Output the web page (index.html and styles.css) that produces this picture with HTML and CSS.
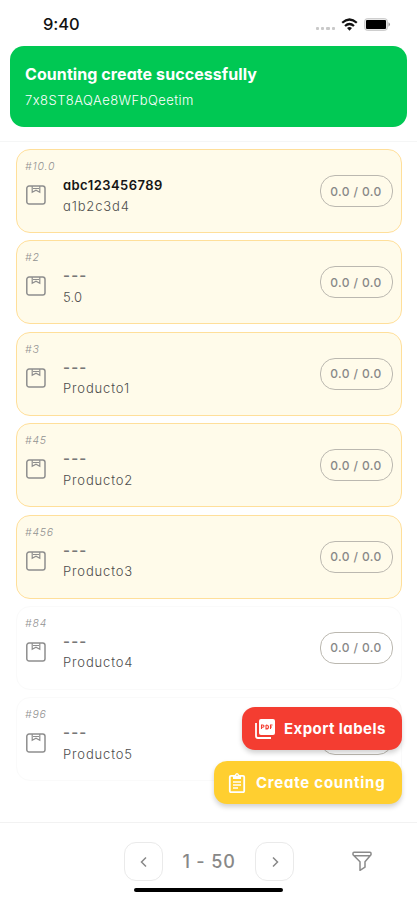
FILE: index.html
```
<!DOCTYPE html>
<html lang="en">
<head>
<meta charset="utf-8">
<title>Counting</title>
<link rel="stylesheet" href="styles.css">
</head>
<body>
<svg width="0" height="0" class="defs" aria-hidden="true">
  <symbol id="box" viewBox="0 0 20 20"><rect x=".8" y="1" width="18.200" height="18" rx="2.300" fill="none" stroke="currentColor" stroke-width="1.500"/><path d="M6.200 1v6.300L10 5.200l3.800 2.100V1M7 3.500h6" fill="none" stroke="currentColor" stroke-width="1.200"/></symbol>
</svg>
<main class="screen">
  <header class="status">
    <span class="time">9:40</span>
    <span class="signal"><i></i><i></i><i></i><i></i></span>
    <svg class="wifi" viewBox="0 0 17 13"><g fill="none" stroke="#111" stroke-width="2.200"><path d="M1.200 4.800Q8.500 -1.800 15.800 4.800"/><path d="M4 8Q8.500 4 13 8"/></g><path d="M6 10Q8.500 8 11 10L8.500 12.700Z" fill="#111"/></svg>
    <svg class="battery" viewBox="0 0 27 13"><rect x=".7" y=".7" width="22.600" height="11.600" rx="2.500" fill="#eee" stroke="#c4c4c4"/><rect x="2" y="2" width="20" height="9" rx="1" fill="#000"/><path d="M24.500 4.300q3 2.200 0 4.400z" fill="#999"/></svg>
  </header>
  <section class="toast">
    <h1>Counting create successfully</h1>
    <p>7x8ST8AQAe8WFbQeetim</p>
  </section>
  <section class="list">
    <article class="card warm"><div class="tag">#10.0</div><svg class="box"><use href="#box"/></svg><div class="info"><b class="name">abc123456789</b><span class="sub">a1b2c3d4</span></div><span class="pill">0.0 / 0.0</span></article>
    <article class="card warm"><div class="tag">#2</div><svg class="box"><use href="#box"/></svg><div class="info"><b class="dash">---</b><span class="sub short">5.0</span></div><span class="pill">0.0 / 0.0</span></article>
    <article class="card warm"><div class="tag">#3</div><svg class="box"><use href="#box"/></svg><div class="info"><b class="dash">---</b><span class="sub">Producto1</span></div><span class="pill">0.0 / 0.0</span></article>
    <article class="card warm"><div class="tag">#45</div><svg class="box"><use href="#box"/></svg><div class="info"><b class="dash">---</b><span class="sub">Producto2</span></div><span class="pill">0.0 / 0.0</span></article>
    <article class="card warm"><div class="tag">#456</div><svg class="box"><use href="#box"/></svg><div class="info"><b class="dash">---</b><span class="sub">Producto3</span></div><span class="pill">0.0 / 0.0</span></article>
    <article class="card"><div class="tag">#84</div><svg class="box"><use href="#box"/></svg><div class="info"><b class="dash">---</b><span class="sub">Producto4</span></div><span class="pill">0.0 / 0.0</span></article>
    <article class="card"><div class="tag">#96</div><svg class="box"><use href="#box"/></svg><div class="info"><b class="dash">---</b><span class="sub">Producto5</span></div><span class="pill"></span></article>
    <div class="actions">
      <button class="action export"><svg viewBox="0 0 20 20"><path d="M1 4v13q0 2 2 2h13" fill="none" stroke="#fff" stroke-width="1.800"/><rect x="4" y="0" width="16" height="16" rx="2" fill="#fff"/><path d="M6.500 10V6h1.200q1.300 0 1.300 1.100T7.700 8.200H6.500M11 6v4q2.500 0 2.500-2T11 6M15.500 10V6h2M15.500 8h1.500" fill="none" stroke="#f43d31" stroke-width="1.100"/></svg><span>Export labels</span></button>
      <button class="action create"><svg viewBox="0 0 20 20"><path d="M4 2.800h12q1.200 0 1.200 1.200v14q0 1.200-1.200 1.200H4q-1.200 0-1.200-1.200V4Q2.800 2.800 4 2.800z" fill="none" stroke="#fff" stroke-width="1.800"/><path d="M6 6V2h1.700q2.300-4 4.600 0H14v4z" fill="#fff"/><circle cx="10" cy="2.300" r=".8" fill="#ffcf30"/><path d="M6 9h8M6 12h8M6 15h5" stroke="#fff" stroke-width="1.500"/></svg><span>Create counting</span></button>
    </div>
  </section>
  <footer class="footer">
    <nav class="pager">
      <button class="step" aria-label="Previous"><svg viewBox="0 0 8 12"><path d="M6 1.500 1.500 6 6 10.500"/></svg></button>
      <span class="range">1 - 50</span>
      <button class="step" aria-label="Next"><svg viewBox="0 0 8 12"><path d="M2 1.500 6.500 6 2 10.500"/></svg></button>
    </nav>
    <svg class="filter" viewBox="0 0 20 20"><path d="M2 1.200h16q1 0 1 1v1.500l-6 7v5.500L8 19.300v-8.600L1 3.700V2.200q0-1 1-1zM2 4.700h16" fill="none" stroke="#8b8b8b" stroke-width="1.500" stroke-linejoin="round"/></svg>
    <div class="home"></div>
  </footer>
</main>
</body>
</html>
```
FILE: styles.css
```
* { box-sizing: border-box; }
body { margin: 0; background: #fff; font-family: Inter, "Open Sans", sans-serif; font-feature-settings: "cv11", "calt" 0; }
.defs { position: absolute; }
.screen { width: 417px; height: 900px; display: flex; flex-direction: column; overflow: hidden; }
.status { height: 46px; flex: none; display: flex; align-items: center; padding: 2px 26px 0 43px; }
.time { font-size: 16.500px; font-weight: 500; color: #111; margin-right: auto; letter-spacing: -.1px; }
.signal { display: flex; gap: 2px; margin: 9px 6px 0 0; }
.signal i { width: 3.3px; height: 3.3px; border-radius: 1px; background: #c9c9c9; }
.wifi { width: 17px; height: 13px; margin-right: 6px; }
.battery { width: 27px; height: 13px; }
.toast { height: 81px; flex: none; margin: 0 10px; border-radius: 14px; background: #00c853; color: #fff; padding: 17px 15px; white-space: nowrap; }
.toast h1 { margin: 0; font-size: 16px; line-height: 22px; font-weight: 700; letter-spacing: .08px; }
.toast p { margin: 5px 0 0; font-size: 13px; line-height: 20px; font-weight: 300; letter-spacing: .450px; }
.list { position: relative; height: 681px; flex: none; margin-top: 14px; border-top: 1px solid #f5f6f6; padding: 7px 15.500px 0 16px; display: flex; flex-direction: column; gap: 7.400px; }
.card { height: 84px; flex: none; display: grid; grid-template-columns: 38px 1fr auto; grid-template-rows: 25px 1fr; align-items: start; border: 1.500px solid #fafafa; border-radius: 14px; padding: 0 8px; background: #fff; }
.warm { background: #fffbea; border-color: #ffdf9a; }
.tag { grid-column: 1; grid-row: 1; font-size: 10.500px; line-height: 16px; padding-top: 9px; font-style: italic; font-weight: 300; color: #929292; white-space: nowrap; letter-spacing: .8px; }
.box { grid-column: 1; grid-row: 2; width: 20px; height: 20px; color: #8e8e8e; margin: 10px 0 0 1px; }
.info { grid-column: 2; grid-row: 2; display: flex; flex-direction: column; align-items: flex-start; }
.name, .dash { height: 20.500px; line-height: 20.500px; font-size: 13px; font-weight: 600; color: #151515; letter-spacing: .450px; }
.dash { color: #777; font-size: 15px; letter-spacing: 1.200px; }
.sub { height: 20px; line-height: 20px; font-size: 13px; font-weight: 300; color: #4d4d4d; letter-spacing: .850px; }
.short { letter-spacing: .200px; }
.pill { grid-column: 3; grid-row: 1 / 3; align-self: center; width: 73px; height: 32px; border: 1.300px solid #bbb8b0; border-radius: 15px; display: flex; align-items: center; justify-content: center; font-size: 12px; font-weight: 500; color: #888; white-space: nowrap; letter-spacing: .400px; }
.actions { position: absolute; right: 15px; top: 565px; display: flex; flex-direction: column; align-items: flex-end; gap: 11px; }
.action { height: 43px; border: 0; border-radius: 13px; display: flex; align-items: center; font: 700 15px Inter, sans-serif; font-feature-settings: "cv11"; color: #fff; padding: 0 0 0 13px; white-space: nowrap; box-shadow: 0 3px 5px rgba(0,0,0,.18); }
.action svg { width: 20px; height: 20px; margin-right: 9px; }
.export { background: #f43d31; width: 160px; letter-spacing: .420px; }
.create { background: #ffcf30; width: 188px; letter-spacing: .750px; }
.footer { flex: 1; border-top: 1px solid #f2f2f2; display: grid; grid-template-columns: 124px 170px 58px 1fr; grid-template-rows: 58px 1fr; align-items: start; }
.pager { grid-column: 2; display: flex; align-items: center; justify-content: space-between; padding-top: 19px; }
.step { width: 39px; height: 39px; padding: 0; border: 1.200px solid #eaeaea; border-radius: 12px; background: #fff; display: grid; place-items: center; }
.step svg { width: 8px; height: 12px; fill: none; stroke: #888; stroke-width: 1.500; }
.range { font-size: 18px; font-weight: 500; color: #888; white-space: nowrap; letter-spacing: .850px; }
.filter { grid-column: 4; width: 20px; height: 20px; margin-top: 28px; }
.home { grid-column: 1 / 5; width: 149px; height: 4px; border-radius: 2px; background: #000; margin: 7px 0 0 134px; }
```
